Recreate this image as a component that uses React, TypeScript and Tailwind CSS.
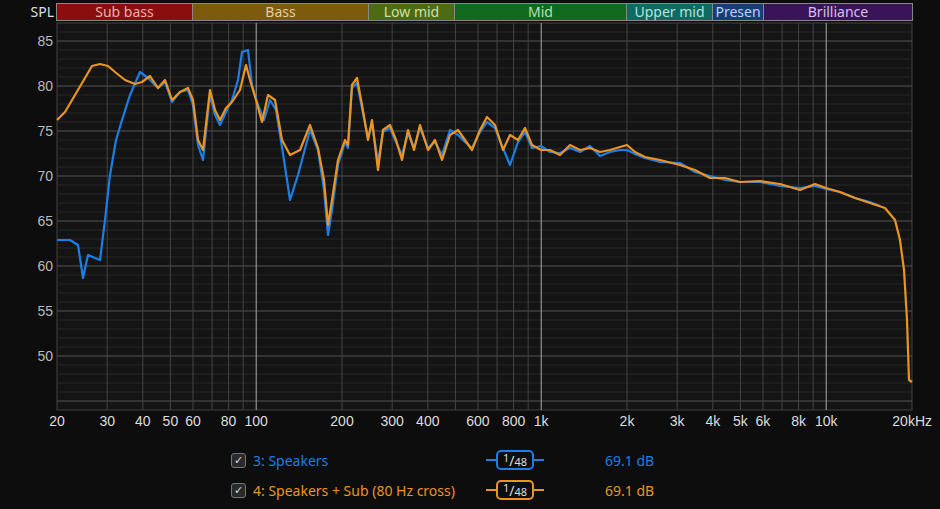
const X0 = 57;
const X1 = 912;
const fx = (f: number) => X0 + 285 * Math.log10(f / 20);
const dy = (db: number) => 41 + (85 - db) * 9;

const BANDS = [
  { label: "Sub bass", w: 136, cls: "bg-[#8b0d0d] text-[#e8b0b0]" },
  { label: "Bass", w: 176, cls: "bg-[#7d5a0c] text-[#e0cfa0]" },
  { label: "Low mid", w: 86, cls: "bg-[#4d6b12] text-[#cfe0a8]" },
  { label: "Mid", w: 172, cls: "bg-[#0f6a1d] text-[#b8e0b8]" },
  { label: "Upper mid", w: 86, cls: "bg-[#0f6a62] text-[#b8e0dc]" },
  { label: "Presen", w: 51, cls: "bg-[#163f78] text-[#c0d0f0]" },
  { label: "Brilliance", w: 148, cls: "bg-[#3a1458] text-[#d8c0ec]" },
];

const orange: [number, number][] = [[57,120],[65,112],[75,95],[85,78],[92,66],[100,64],[108,66],[115,72],[125,80],[135,84],[142,82],[150,76],[158,88],[165,80],[172,100],[180,92],[188,88],[193,100],[198,140],[203,150],[210,90],[215,110],[220,120],[226,108],[232,102],[240,90],[246,65],[250,80],[256,100],[262,122],[268,95],[275,100],[282,140],[290,155],[300,150],[310,125],[318,148],[324,180],[328,225],[332,200],[338,160],[345,140],[348,145],[352,85],[357,78],[362,105],[368,140],[372,120],[378,170],[383,130],[390,125],[396,140],[402,160],[408,130],[414,150],[420,125],[428,150],[435,140],[442,160],[450,135],[458,130],[465,140],[472,150],[480,130],[487,117],[495,125],[503,150],[510,135],[518,140],[525,128],[532,145],[541,150],[550,150],[560,155],[570,145],[580,150],[590,148],[600,152],[610,150],[620,147],[627,145],[635,152],[645,157],[660,160],[680,165],[695,170],[710,178],[725,178],[740,182],[760,181],[780,184],[800,190],[815,184],[826,188],[840,192],[855,198],[870,203],[885,208],[895,220],[900,240],[904,270],[907,320],[909,380],[912,382]];

const blue: [number, number][] = [[57,240],[70,240],[78,245],[83,278],[88,255],[95,258],[100,260],[105,220],[110,175],[116,140],[122,120],[130,95],[140,72],[148,78],[158,88],[165,82],[172,102],[180,92],[188,90],[193,105],[198,145],[203,160],[210,95],[215,115],[220,125],[226,112],[232,100],[238,80],[242,52],[248,50],[252,85],[258,105],[264,120],[270,100],[276,110],[284,160],[290,200],[298,175],[310,130],[318,150],[324,190],[328,235],[332,210],[338,165],[345,142],[348,148],[352,88],[357,83],[362,108],[368,138],[372,124],[378,162],[383,132],[390,128],[396,142],[402,155],[408,133],[414,148],[420,128],[428,148],[435,142],[442,155],[450,130],[458,135],[465,142],[472,148],[480,132],[487,122],[495,128],[503,148],[510,165],[518,142],[525,132],[532,148],[541,146],[550,152],[560,153],[570,148],[580,152],[590,146],[600,156],[610,152],[620,150],[627,150],[635,154],[645,158],[660,162],[680,163],[695,172],[710,176],[725,180],[740,182],[760,182],[780,186],[800,188],[815,186],[826,189],[840,192],[855,198],[870,202],[880,206]];

const pts = (a: [number, number][]) => a.map(([x, y]) => `${x},${y - 22}`).join(" ");

const minorF = [30, 40, 50, 60, 70, 80, 90, 200, 300, 400, 500, 600, 700, 800, 900, 2000, 3000, 4000, 5000, 6000, 7000, 8000, 9000];
const majorF = [100, 1000, 10000];
const xLabels: [number, string][] = [[20,"20"],[30,"30"],[40,"40"],[50,"50"],[60,"60"],[80,"80"],[100,"100"],[200,"200"],[300,"300"],[400,"400"],[600,"600"],[800,"800"],[1000,"1k"],[2000,"2k"],[3000,"3k"],[4000,"4k"],[5000,"5k"],[6000,"6k"],[8000,"8k"],[10000,"10k"]];

function Smoothing({ color }: { color: string }) {
  return (
    <div className="flex items-center">
      <div className="h-[2px] w-[10px]" style={{ background: color }} />
      <div className="flex h-[20px] w-[38px] items-center justify-center rounded-[5px] border-2 text-[11px] text-[#ddd]" style={{ borderColor: color }}>
        <span className="-mt-1">1</span><span className="text-[14px]">/</span><span className="mt-1">48</span>
      </div>
      <div className="h-[2px] w-[10px]" style={{ background: color }} />
    </div>
  );
}

function Row({ label, color }: { label: string; color: string }) {
  return (
    <div className="flex h-[30px] items-center">
      <div className="ml-[231px] flex h-[15px] w-[15px] items-center justify-center rounded-[3px] border border-[#777] bg-[#2a2a2a] text-[11px] text-[#ddd]">✓</div>
      <div className="ml-[7px] w-[233px] text-[14px]" style={{ color }}>{label}</div>
      <Smoothing color={color} />
      <div className="ml-[61px] text-[14px]" style={{ color }}>69.1 dB</div>
    </div>
  );
}

export default function App() {
  return (
    <div className="h-[509px] w-[940px] overflow-hidden bg-[#0d0d0d] [font-family:'Liberation_Sans',Arial,sans-serif]">
      <div className="flex h-[22px] items-start pt-[3px]">
        <div className="w-[56px] pr-[2px] text-right text-[14px] leading-[17px] text-[#ddd]">SPL</div>
        <div className="flex h-[18px] border border-[#888]">
          {BANDS.map((b) => (
            <div key={b.label} style={{ width: b.w }} className={`${b.cls} overflow-hidden whitespace-nowrap border-r border-[#888] text-center text-[14px] leading-[16px] last:border-r-0`}>
              {b.label}
            </div>
          ))}
        </div>
      </div>
      <svg width={940} height={420} className="block" fontFamily="'Liberation Sans', Arial, sans-serif">
        <rect x={X0} y={1} width={X1 - X0} height={387} fill="#141414" stroke="#444" />
        {Array.from({ length: 43 }, (_, i) => 44 + i).map((d) => (
          <line key={d} x1={X0} x2={X1} y1={dy(d) - 22} y2={dy(d) - 22} stroke={d % 5 === 0 ? "#555" : "#262626"} />
        ))}
        {minorF.map((f) => (
          <line key={f} x1={fx(f)} x2={fx(f)} y1={1} y2={388} stroke="#444" />
        ))}
        {majorF.map((f) => (
          <line key={f} x1={fx(f)} x2={fx(f)} y1={1} y2={388} stroke="#aaa" />
        ))}
        {[85, 80, 75, 70, 65, 60, 55, 50].map((d) => (
          <text key={d} x={53} y={dy(d) - 22 + 5} textAnchor="end" fontSize={14} fill="#bbb">{d}</text>
        ))}
        <polyline points={pts(blue)} fill="none" stroke="#1b7fe6" strokeWidth={2.2} strokeLinejoin="round" />
        <polyline points={pts(orange)} fill="none" stroke="#ec9420" strokeWidth={2.2} strokeLinejoin="round" />
        {xLabels.map(([f, l]) => (
          <text key={f} x={fx(f)} y={404} textAnchor="middle" fontSize={14} fill="#ddd">{l}</text>
        ))}
        <text x={X1 + 20} y={404} textAnchor="end" fontSize={14} fill="#ddd">20kHz</text>
      </svg>
      <div className="mt-[3px]">
        <Row label="3: Speakers" color="#1b7fe6" />
        <Row label="4: Speakers + Sub (80 Hz cross)" color="#ec9420" />
      </div>
    </div>
  );
}
